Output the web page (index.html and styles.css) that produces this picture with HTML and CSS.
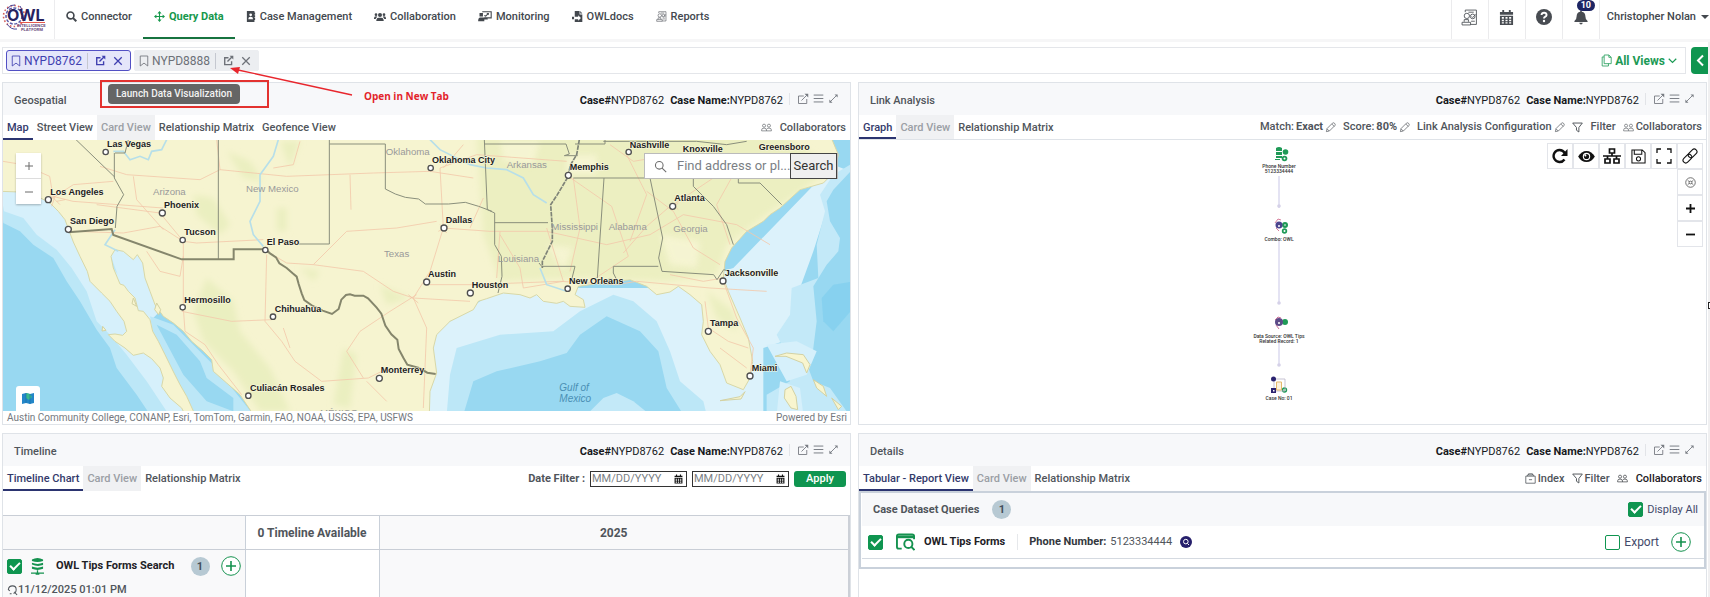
FILE: index.html
```html
<!DOCTYPE html>
<html lang="en">
<head>
<meta charset="utf-8">
<title>OWL Intelligence Platform - Query Data</title>
<meta name="viewport" content="width=device-width, initial-scale=1">
<link rel="stylesheet" href="styles.css">
</head>
<body>
<svg class="sprite" aria-hidden="true">
  <symbol id="i-launch" viewBox="0 0 16 16"><path d="M13 8v6H2V4h7" fill="none" stroke="currentColor" stroke-width="1.2"/><path d="M6 10l7-7" fill="none" stroke="currentColor" stroke-width="1.2"/><path d="M10 1h5v5z" fill="currentColor"/></symbol>
  <symbol id="i-launch-bold" viewBox="0 0 16 16"><path d="M12.500 9v5H2.500V4H8M6.500 9.500L13 3" fill="none" stroke="currentColor" stroke-width="2"/><path d="M9.500 1H15v5.500z" fill="currentColor"/></symbol>
  <symbol id="i-menu" viewBox="0 0 16 16"><path d="M1 3h14M1 8h14M1 13h14" stroke="currentColor" stroke-width="1.400"/></symbol>
  <symbol id="i-expand" viewBox="0 0 16 16"><path d="M3 13L13 3" stroke="currentColor" stroke-width="1.300"/><path d="M9.500 2H14v4.500zM2 9.500V14h4.500z" fill="currentColor"/></symbol>
  <symbol id="i-people" viewBox="0 0 18 14"><g fill="none" stroke="currentColor"><circle cx="5" cy="4" r="2.500"/><circle cx="13" cy="4" r="2.500"/><path d="M1 12.500V11q0-3 4-3t4 3v1.500zM9 12.500h8V11q0-3-4-3-3 0-4 2"/></g></symbol>
  <symbol id="i-pencil" viewBox="0 0 16 16"><path d="M2 14l1-4.500L11 1.500q1.500-1 3 .5t.5 3L6.500 13zM10 3l3.500 3.500M3 10l3 3" fill="none" stroke="currentColor"/></symbol>
  <symbol id="i-funnel" viewBox="0 0 16 16"><path d="M1 1.500h14L10 8v6.500L6.500 12V8z" fill="none" stroke="currentColor" stroke-width="1.400"/></symbol>
  <symbol id="i-close" viewBox="0 0 16 16"><path d="M2 2l12 12M14 2L2 14" stroke="currentColor" stroke-width="2"/></symbol>
  <symbol id="i-bookmark" viewBox="0 0 12 14"><path d="M1.500 1h9v12L6 9.500 1.500 13z" fill="none" stroke="currentColor"/></symbol>
  <symbol id="i-search" viewBox="0 0 16 16"><circle cx="6.500" cy="6.500" r="4.700" fill="none" stroke="currentColor" stroke-width="1.300"/><path d="M10 10l5 5" stroke="currentColor" stroke-width="1.300"/></symbol>
  <symbol id="i-cal" viewBox="0 0 16 16"><path fill="currentColor" fill-rule="evenodd" d="M1 2h2.500V0h2v2h5V0h2v2H15v3H1zM1 6h14v10H1zM3 7.500v1.700h2.200V7.500zm3.900 0v1.700h2.200V7.500zm3.900 0v1.700H13V7.500zM3 10.300V12h2.200v-1.700zm3.900 0V12h2.200v-1.700zm3.900 0V12H13v-1.700zM3 13v1.500h2.200V13zm3.900 0v1.500h2.200V13zm3.900 0v1.500H13V13z"/></symbol>
  <symbol id="i-report" viewBox="0 0 16 16"><g fill="none" stroke="currentColor" stroke-width=".8"><path d="M4 3V1h10.500v13.500H9M1 12.500h8v2.500H1zM3 12v-2h4v2M7 3h5"/><circle cx="5.500" cy="6.500" r="2.500"/><circle cx="11" cy="7" r="2.200"/><path d="M10 7l1 1 3-3M9.500 11.500H13"/></g></symbol>
  <symbol id="i-plus-circle" viewBox="0 0 20 20"><circle cx="10" cy="10" r="9.300" fill="#fff" stroke="currentColor"/><path d="M10 5v10M5 10h10" stroke="currentColor" stroke-width="1.600"/></symbol>
</svg>

<header class="topbar">
  <a class="logo" href="#" aria-label="OWL Intelligence Platform">
    <svg viewBox="0 0 44 32" width="44" height="32">
      <g fill="none">
        <circle cx="12" cy="14" r="10.500" stroke="#d5605c" stroke-width="1.600" stroke-dasharray="1.600 2.200"/>
        <circle cx="12" cy="14" r="8" stroke="#5c5aa8" stroke-width="1.500" stroke-dasharray="3 1.600"/>
        <path d="M5 22q4 6 10 5M5 7q4-5 8-4M18 4l2 4" stroke="#4b4799"/>
      </g>
      <text x="5" y="19" class="logo-word">OWL</text>
      <path d="M18 20.500h25" stroke="#e4574c"/>
      <text x="15" y="25" class="logo-sub">INTELLIGENCE</text>
      <text x="19" y="29" class="logo-sub">PLATFORM</text>
    </svg>
  </a>
  <nav class="nav">
    <a href="#" class="nav-item"><svg viewBox="0 0 16 16" width="11" height="11"><circle cx="6.500" cy="6.500" r="5" fill="none" stroke="currentColor" stroke-width="2.400"/><path d="M10 10l5 5" stroke="currentColor" stroke-width="3"/></svg>Connector</a>
    <a href="#" class="nav-item active"><svg viewBox="0 0 16 16" width="11" height="11"><path d="M8 2v12M2 8h12" stroke="currentColor" stroke-width="1.600"/><path d="M8 0l3 3.500H5zM8 16l3-3.500H5zM0 8l3.500-3v6zM16 8l-3.500-3v6z" fill="currentColor"/></svg>Query Data</a>
    <a href="#" class="nav-item"><svg viewBox="0 0 14 16" width="10" height="11"><path fill="currentColor" fill-rule="evenodd" d="M1 0h11v2h1v3h-1v1h1v3h-1v1h1v3h-1v3H1zM6.500 3.500a2 2 0 100 4 2 2 0 000-4zM3 12h7q0-3.500-3.500-3.500T3 12z"/></svg>Case Management</a>
    <a href="#" class="nav-item"><svg viewBox="0 0 18 14" width="12" height="10"><g fill="currentColor"><circle cx="9" cy="4" r="3"/><circle cx="3" cy="3.500" r="2"/><circle cx="15" cy="3.500" r="2"/><path d="M3.500 13v-1.500Q4 8 7 8h4q3 0 3.500 3.500V13zM0 9q0-3 3-3 1.500 0 2 1-2 1-2.500 3H0zM18 9q0-3-3-3-1.500 0-2 1 2 1 2.500 3H18z"/></g></svg>Collaboration</a>
    <a href="#" class="nav-item"><svg viewBox="0 0 20 16" width="14" height="11"><path d="M6 1h13v9H9M9 6.500l2 1 4-4" fill="none" stroke="currentColor" stroke-width="1.600"/><path d="M12 3h3.500v3zM2 3h5v5H2zM0 15q0-5 3-5.500h5l6 1v2H9V15z" fill="currentColor"/></svg>Monitoring</a>
    <a href="#" class="nav-item"><svg viewBox="0 0 16 16" width="11" height="11"><path fill="currentColor" fill-rule="evenodd" d="M4 0h7v5h4v11H4v-4h5v2l4-4-4-4v2.500H4zM12 0l3 3.500h-3zM0 8.500h3V12H0z"/></svg>OWLdocs</a>
    <a href="#" class="nav-item"><svg width="11" height="11"><use href="#i-report"/></svg>Reports</a>
  </nav>
  <div class="tools">
    <button class="tool" aria-label="Reports"><svg width="17" height="17"><use href="#i-report"/></svg></button>
    <button class="tool" aria-label="Calendar"><svg width="15" height="15"><use href="#i-cal"/></svg></button>
    <button class="tool" aria-label="Help"><svg viewBox="0 0 16 16" width="16" height="16"><circle cx="8" cy="8" r="8" fill="currentColor"/><path d="M5.500 6q.3-2.300 2.600-2.300T10.600 6Q10.600 7 9 7.900 8 8.400 8 9.500" fill="none" stroke="#fff" stroke-width="1.900"/><circle cx="8" cy="12" r="1.200" fill="#fff"/></svg></button>
    <button class="tool" aria-label="Notifications, 10 new"><svg viewBox="0 0 16 16" width="14" height="15"><path d="M8 0q1 0 1 1.300 4 1 4 5.200 0 4 2.500 5.500v1H.5v-1Q3 10.500 3 6.500q0-4.200 4-5.200Q7 0 8 0zM6 14h4q-.3 2-2 2t-2-2z" fill="currentColor"/></svg><span class="count">10</span></button>
    <button class="user">Christopher Nolan<span class="caret"></span></button>
  </div>
</header>

<main class="page">
  <div class="casebar-row">
    <div class="casebar">
      <div class="chip chip-on">
        <svg width="10" height="12"><use href="#i-bookmark"/></svg><span class="chip-name">NYPD8762</span>
        <button aria-label="Open NYPD8762 in new tab"><svg width="11" height="11"><use href="#i-launch-bold"/></svg></button>
        <button aria-label="Close NYPD8762"><svg width="10" height="10"><use href="#i-close"/></svg></button>
      </div>
      <div class="chip">
        <svg width="10" height="12"><use href="#i-bookmark"/></svg><span class="chip-name">NYPD8888</span>
        <button aria-label="Open NYPD8888 in new tab"><svg width="11" height="11"><use href="#i-launch-bold"/></svg></button>
        <button aria-label="Close NYPD8888"><svg width="10" height="10"><use href="#i-close"/></svg></button>
      </div>
      <button class="all-views"><svg viewBox="0 0 14 16" width="11" height="13"><path d="M4 1h6l3 3v8H4zM10 1v3h3M4 3.500H1.500V15h8v-3" fill="none" stroke="currentColor"/></svg>All Views<svg viewBox="0 0 12 8" width="9" height="6"><path d="M1 1l5 5 5-5" fill="none" stroke="currentColor" stroke-width="1.600"/></svg></button>
    </div>
    <button class="drawer" aria-label="Open drawer"><svg viewBox="0 0 8 12" width="8" height="13"><path d="M7 1L2 6l5 5" fill="none" stroke="#fff" stroke-width="2"/></svg></button>
  </div>

  <div class="panels">
    <section class="panel">
      <div class="panel-head"><h2>Geospatial</h2>
        <p class="case"><b>Case#</b>NYPD8762</p><p class="case"><b>Case Name:</b>NYPD8762</p>
        <div class="head-icons"><button aria-label="Open"><svg width="12" height="12"><use href="#i-launch"/></svg></button><button aria-label="Menu"><svg width="11" height="11"><use href="#i-menu"/></svg></button><button aria-label="Expand"><svg width="11" height="11"><use href="#i-expand"/></svg></button></div>
      </div>
      <div class="tabs"><button class="tab on">Map</button><button class="tab">Street View</button><button class="tab off">Card View</button><button class="tab">Relationship Matrix</button><button class="tab">Geofence View</button>
        <div class="tab-tools"><button class="wide"><svg width="11" height="9"><use href="#i-people"/></svg>Collaborators</button></div>
      </div>
      <div class="map">
        <svg class="map-art" viewBox="9 15 2541 815" preserveAspectRatio="xMidYMid slice" role="img" aria-label="Map of the southern United States and northern Mexico">
          <defs>
            <clipPath id="landclip"><use href="#land"/></clipPath>
            <filter id="soft"><feGaussianBlur stdDeviation="9"/></filter>
          </defs>
          <rect x="0" y="0" width="2560" height="840" fill="#98d8f1"/>
          <path fill="#bce7f7" d="M0 165L10 265 60 290 100 330 160 370 200 440 240 500 290 585 330 640 350 700 410 780 450 840H620L300 300 100 150z"/>
          <path fill="#d6f0fb" d="M0 160L12 230 70 250 110 300 170 345 215 400 260 470 290 560 330 600 380 660 440 740 500 830H640L340 400 180 180z"/>
          <path fill="#d6f0fb" d="M320 330L450 350 480 530 450 560 390 520z"/>
          <path fill="#bce7f7" d="M450 545L520 570 640 690 760 840H570L460 600z"/>
          <path fill="#98d8f1" d="M470 570L530 600 600 680 620 730 700 790 700 830 620 800 550 720z"/>
          <path fill="#dcf2fb" d="M1270 840L1290 600 1500 460H2000L2200 400 2500 90 2550 110V170L2490 150 2475 240 2440 350 2400 460 2380 590 2350 620 2290 640V840z"/>
          <path fill="#c3e9f8" d="M2500 120L2550 90V840H2300V780L2370 740 2350 640 2330 600 2370 540 2375 460 2455 430 2450 330 2475 230 2460 180z"/>
          <path fill="#98d8f1" d="M2552 110L2500 165 2480 200 2490 260 2520 310 2515 350 2480 390 2440 455 2450 560 2440 640 2425 700 2440 740 2490 760 2540 830H2560z"/>
          <path fill="#7ccdee" d="M2560 440L2500 450 2465 490 2470 560 2500 590 2560 520z" opacity=".6"/>
          <path fill="#bce7f7" d="M1340 840L1350 720 1370 640 1500 600 1660 590 1740 530 1840 480 1900 500 1970 560 2010 650 2040 740 2110 800 2120 840z"/>
          <path fill="#98d8f1" d="M1390 840L1420 740 1490 710 1620 680 1700 655 1740 600 1820 545 1920 590 1975 650 2000 760 2050 840z"/>
          <path fill="#c3e9f8" d="M1760 840L1810 790 1850 775 1900 800 1950 840z"/>
          <path fill="#d6f0fb" d="M2300 630l90-10 60 30-30 70-60 20zM2340 740l60 20 10 80h-80z"/>
          <path id="land" fill="#f6f4d0" stroke="#d8d8a8" stroke-width="3" d="M0 0V170L60 172 100 168 118 188 150 205 175 230 195 255 208 290 220 322 240 365 262 410 270 440 305 475 330 500 350 530 372 560 380 590 368 602 345 598 325 600 345 620 375 640 400 662 430 655 455 672 480 700 490 730 485 755 510 790 545 820 555 840H585L560 785 540 750 522 715 495 660 475 620 458 590 450 555 430 530 415 528 405 490 385 470 372 452 360 448 340 400 333 365 345 345 370 350 400 375 412 360 428 385 435 430 450 470 465 510 490 545 520 565 550 590 575 620 610 650 635 675 640 710 680 745 720 780 760 840H1288L1290 770 1310 715 1300 640 1310 600 1350 560 1420 525 1435 500 1460 492 1510 475 1560 480 1590 490 1610 480 1630 500 1670 506 1690 500 1710 515 1755 518 1750 495 1725 480 1735 455 1770 450 1810 442 1830 430 1850 440 1890 435 1940 455 1970 480 2010 472 2035 455 2070 480 2105 510 2110 560 2105 600 2130 650 2160 690 2180 745 2230 765 2250 730 2258 680 2245 610 2220 550 2185 470 2170 430 2175 380 2195 340 2240 290 2290 260 2310 240 2340 220 2400 165 2470 145 2505 110 2515 60 2490 0z"/>
          <g clip-path="url(#landclip)">
            <g filter="url(#soft)" fill="#e6edb9">
              <path d="M1430 0H2350L2500 100 2300 240 2180 330 2150 420 2000 440 1740 430 1500 440 1450 300z" opacity=".65"/>
              <path opacity=".7" d="M580 180l60 10 50 80-30 30-70-60zM680 50l70 30 40 60-60-10zM830 220h30v70h-30zM620 430l80 70 20 90 90 110 60 130h-90l-80-120-90-90-30-90zM1030 640l40 20-20 160-50-10zM150 250l60 60-20 20zM840 20h60l-30 80zM2120 470l80 60 10 60-60-40zM900 400l60 10-20 30zM1140 450l90 40-70 20z"/>
            </g>
            <g fill="#f8f6d6" opacity=".8" filter="url(#soft)"><path d="M1500 20h120l-20 70-90-10zM1700 60h90v60h-90zM1980 300l120 20-10 80-80-10zM1640 330l80 10-30 70z"/></g>
          </g>
          <g fill="none" stroke="#f3c9ab" stroke-width="2.500">
            <path d="M9 80l60 10 80 35 10 60 60 15 270 20M150 195l70-45 120-10M290 210l190 25 70 85 40 5 200-10M220 290l150 5 110-20 70 45v200l5 70 60 40 40 60 70 90M300 95l80 25 220 15 60-30 200 20 260-10 170-5 130 20M400 125l10 70 80 90M800 350l60 35 80 5 100-100 150-10 120-20M940 390l150 20 90 60 60 20 170 10M800 360l-5 200 50 60 40 60 80 60 140-10 60-30M545 530l150 30 120-5M870 640l-20-60M1050 120l3 105M440 350l40 60 60 15 10-60M650 15l10 90M900 20l-20 70-60 10M1240 490l50-80 40-130-10-180 110-40 270 20M1240 490l40 90-10 240M1290 450l130 0 260-10 170 10 60-10 220 20 170 10M1330 280l140 10 170 0 180 40 130-30 100-60 160 30 100 60M1705 125l130 90 50 150-120 80M1500 300l60 100 10 60 120-20M1500 290l-10 140M1880 60l60 120-50 140M1940 170l80 60 60 110 80 50M2020 210l120-80 120-30M2010 215l-70 60-70 80M1720 130l20 150-30 130M2170 440l40 110 50 90-10 80M2170 430l-60 10-100-20M2115 500l10 80 60 40 60 20M2160 640l80 60M1640 280l50 160M1830 30l70 50 120-20M2190 330l-40-120 50-90"/>
            <path d="M1090 730l-50-80 40-60 90-60 80-50M1100 740l60 60M1330 100l60-70M1450 190l-40 90"/>
          </g>
          <g fill="none" stroke="#f0c0a0" stroke-width="2"><path d="M150 180l30 30M165 185l-10 30M170 200l25-5M1320 270l20 25M1315 290l30-15M1225 480l30 25M2015 205l20 20M2010 225l25-20"/></g>
          <g fill="none" stroke="#b7dfe9" stroke-width="5">
            <path d="M340 50l30 0 20 25 30-10 25 10 10-25 30-5 15-30M835 15l-15 50-40 55 0 80-30 60 10 40 30 35M1290 15l30 30 90 45 50 10 60 5 50 25 30 50 40 25M1620 400l20 50 60 20M345 285l-30 45 40 20"/>
          </g>
          <g fill="none" stroke="#8a8f7c" stroke-width="3">
            <path d="M228 15L345 128M345 55h30l10-40M343 55v75l28 50-20 35-5 65M655 15v358M988 15v313H890M988 28h168v135l30 15 30 10 40 5 20 15 70 0 50-5 40 12 40 15M1453 15l9 210 22 10v95l20 35 2 60-12 50M1453 28h245l10 30-15 5h40M1484 264h160M1720 130h400l130 0M1725 28h90V15M1812 130l-20 300M1950 130l38 180-12 60 10 40 155 10 10 15 20-30 15 5M1725 395H1625l-8-10M1725 395l-10 40M1850 435l-10-20 0-20h135M2080 130l0 25 60 60 40 55 20 60M2215 130v15h65l65 65M1810 20h280l90 10 60-10"/>
            <path stroke="#7f8478" stroke-width="5" d="M1738 15l-8 45-18 30-10 40-30 50-20 30 5 70 0 40-30 60 0 20" stroke-dasharray="14 3"/>
            <path stroke="#85866c" stroke-width="6" d="M205 293l130-10 5 18 205 73h156v-30h95l14 12 18 12 10 18 22 14 18 16 12 10 6 22 9 28 8 20 25 18 30 14 28 10 20-15 8-28 14-14 12-2 14 4 26 0 14 8 26 28 14 18 12 36 18 26 18 16 4 28 14 26 12 21 35 10 25 14 25 4"/>
          </g>
          <g fill="#f8f5cf" stroke="#d3d2a4" stroke-width="3"><path d="M2325 665l35-10 50 5 20 30-10 25-12-30-50-20zM2355 765l18-10 15 30 5 40-20-5-20-30zM2440 735l30 20 10 30-30-25zM2495 790l30 25-10 10zM2160 798l60-12 15-15-12 22z"/><path d="M400 490l10 25-14-8zM470 505l12 20-6 15-12-15zM308 575l10 12-12 2z"/></g>
          <g class="city-dots">
            <circle cx="317" cy="52" r="8"/><circle cx="145" cy="195" r="9"/><circle cx="205" cy="284" r="9"/><circle cx="487" cy="235" r="9"/><circle cx="548" cy="316" r="8"/><circle cx="796" cy="346" r="8"/><circle cx="548" cy="518" r="8"/><circle cx="819" cy="546" r="8"/><circle cx="1138" cy="731" r="9"/><circle cx="745" cy="783" r="8"/><circle cx="1280" cy="442" r="9"/><circle cx="1292" cy="100" r="8"/><circle cx="1332" cy="280" r="9"/><circle cx="1411" cy="475" r="9"/><circle cx="1705" cy="122" r="9"/><circle cx="1886" cy="52" r="8"/><circle cx="2018" cy="215" r="9"/><circle cx="2169" cy="439" r="9"/><circle cx="2125" cy="590" r="9"/><circle cx="2250" cy="724" r="9"/><circle cx="1703" cy="462" r="8"/>
          </g>
          <g class="state">
            <text x="459" y="182">Arizona</text><text x="738" y="173">New Mexico</text><text x="1157" y="62">Oklahoma</text><text x="1152" y="366">Texas</text><text x="1520" y="101">Arkansas</text><text x="1654" y="287">Mississippi</text><text x="1826" y="285">Alabama</text><text x="2020" y="293">Georgia</text><text x="1493" y="382">Louisiana</text><text x="960" y="845">MÉXICO</text>
          </g>
          <g class="city">
            <text x="321" y="37">Las Vegas</text><text x="151" y="180">Los Angeles</text><text x="210" y="268">San Diego</text><text x="492" y="219">Phoenix</text><text x="553" y="302">Tucson</text><text x="800" y="332">El Paso</text><text x="553" y="504">Hermosillo</text><text x="824" y="531">Chihuahua</text><text x="1142" y="715">Monterrey</text><text x="750" y="769">Culiacán Rosales</text><text x="1284" y="427">Austin</text><text x="1296" y="86">Oklahoma City</text><text x="1337" y="264">Dallas</text><text x="1415" y="459">Houston</text><text x="1709" y="106">Memphis</text><text x="1889" y="39">Nashville</text><text x="2048" y="52">Knoxville</text><text x="2276" y="46">Greensboro</text><text x="2023" y="200">Atlanta</text><text x="2174" y="423">Jacksonville</text><text x="2130" y="574">Tampa</text><text x="2255" y="708">Miami</text><text x="1707" y="449">New Orleans</text>
          </g>
          <g class="sea"><text x="1678" y="769">Gulf of</text><text x="1678" y="801">Mexico</text></g>
        </svg>
        <div class="zoomer"><button aria-label="Zoom in"><svg viewBox="0 0 8 8" width="8" height="8"><path d="M4 0v8M0 4h8"/></svg></button><button aria-label="Zoom out"><svg viewBox="0 0 8 8" width="8" height="8"><path d="M0 4h8"/></svg></button></div>
        <form class="finder"><svg width="13" height="13"><use href="#i-search"/></svg><input type="text" aria-label="Find address or place" placeholder="Find address or pl..."><button type="button">Search</button></form>
        <button class="basemap" aria-label="Basemap"><svg viewBox="0 0 12 11" width="12" height="11"><path d="M0 1l4-1 4 1 4-1v10l-4 1-4-1-4 1z" fill="#2386c8"/><path d="M4 0l4 1 2 3-3 3-3-2z" fill="#38b98c"/><path d="M4 0v10M8 1v10" stroke="#176ba5" stroke-width=".6"/></svg></button>
      </div>
      <div class="credit"><span>Austin Community College, CONANP, Esri, TomTom, Garmin, FAO, NOAA, USGS, EPA, USFWS</span><span>Powered by Esri</span></div>
    </section>

    <section class="panel">
      <div class="panel-head"><h2>Link Analysis</h2>
        <p class="case"><b>Case#</b>NYPD8762</p><p class="case"><b>Case Name:</b>NYPD8762</p>
        <div class="head-icons"><button aria-label="Open"><svg width="12" height="12"><use href="#i-launch"/></svg></button><button aria-label="Menu"><svg width="11" height="11"><use href="#i-menu"/></svg></button><button aria-label="Expand"><svg width="11" height="11"><use href="#i-expand"/></svg></button></div>
      </div>
      <div class="tabs ruled"><button class="tab on">Graph</button><button class="tab off">Card View</button><button class="tab">Relationship Matrix</button>
        <div class="tab-tools"><button>Match: <b>Exact</b><svg width="11" height="11"><use href="#i-pencil"/></svg></button><button>Score: <b>80%</b><svg width="11" height="11"><use href="#i-pencil"/></svg></button><button>Link Analysis Configuration <svg width="11" height="11"><use href="#i-pencil"/></svg></button><button class="wide"><svg width="11" height="11"><use href="#i-funnel"/></svg>Filter</button><button><svg width="11" height="9"><use href="#i-people"/></svg>Collaborators</button></div>
      </div>
      <div class="graph">
        <svg class="graph-art" viewBox="0 0 120 282" width="120" height="282" role="img" aria-label="Link graph with four nodes">
          <path d="M60 36v32M60 98v66M60 200v26" stroke="#dcdaf0" stroke-width="1.500"/>
          <g fill="#d5d1e8"><circle cx="60" cy="66" r="1.800"/><circle cx="60" cy="163" r="1.800"/><circle cx="60" cy="225" r="1.800"/></g>
          <g fill="#1f9a57"><path d="M57 8q3-2 6 0v3h-6zM57 12h6v3h-6zM57 16h6v2h-6zM56 19h5v1h-5z"/><circle cx="66.500" cy="12" r="2.800"/><circle cx="65.500" cy="18.500" r="2.800"/><circle cx="66" cy="85" r="3"/><circle cx="65.500" cy="91" r="2.700"/><circle cx="66" cy="182" r="3"/><circle cx="65.500" cy="250" r="2.700"/></g>
          <g fill="#fff"><circle cx="65.500" cy="18.500" r="1"/><circle cx="66" cy="85" r=".8"/><circle cx="65.500" cy="91" r="1"/><rect x="64" y="249.500" width="3" height="1"/></g>
          <g><circle cx="60" cy="85" r="3.500" fill="#4c448e"/><path d="M56 83l3-4 3 1M57 88l3 3" stroke="#d77c9a" fill="none"/><circle cx="60" cy="86" r="1" fill="#fff"/><circle cx="60" cy="182" r="4" fill="#5c4b88"/><path d="M56 180l3-3 3 1M57 185l3 4" stroke="#c7719a" fill="none"/><circle cx="60" cy="183" r="1" fill="#fff"/></g>
          <path d="M55 239h11v12H55z" fill="none" stroke="#b9b4c8" stroke-width=".8"/><path d="M57.500 242h5v8h-5z" fill="#fdf3df" stroke="#e5b96b"/><circle cx="54.500" cy="239" r="2.500" fill="#2b2370"/><rect x="52" y="248" width="5" height="5" fill="#2b2370"/><rect x="54" y="250" width="1.500" height="1.500" fill="#fff"/>
          <g class="node-label"><text x="60" y="28">Phone Number</text><text x="60" y="33">5123334444</text><text x="60" y="101">Combo: OWL</text><text x="60" y="198">Data Source: OWL Tips</text><text x="60" y="203">Related Record: 1</text><text x="60" y="260">Case No: 01</text></g>
        </svg>
        <div class="gtools">
          <button aria-label="Refresh"><svg viewBox="0 0 16 16" width="16" height="16"><path d="M12.500 11.500A6 6 0 117.500 2q3.500 0 5.500 3.500" fill="none" stroke="currentColor" stroke-width="2.400"/><path d="M15.500 1v7H9z" fill="currentColor"/></svg></button>
          <button aria-label="Visibility"><svg viewBox="0 0 18 14" width="17" height="13"><path fill="currentColor" d="M9 1q5.500 0 9 6-3.500 6-9 6T0 7q3.500-6 9-6z"/><circle cx="9" cy="7" r="4" fill="#fff"/><circle cx="9" cy="7" r="2.800" fill="currentColor"/><circle cx="7.800" cy="5.800" r="1.100" fill="#fff"/></svg></button>
          <button aria-label="Hierarchy"><svg viewBox="0 0 18 16" width="18" height="16"><g fill="none" stroke="currentColor" stroke-width="1.700"><path d="M6.500 1h5v4h-5zM2 11h5v4H2zM11 11h5v4h-5zM9 5v3M0 8h18M4.500 8v3M13.500 8v3"/></g></svg></button>
          <button aria-label="Save"><svg viewBox="0 0 16 16" width="15" height="15"><g fill="none" stroke="currentColor" stroke-width="1.100"><path d="M1 1h11l3 3v11H1zM3.500 1v4.500h8V1"/><circle cx="8" cy="10.500" r="2.200"/></g></svg></button>
          <button aria-label="Fit"><svg viewBox="0 0 16 16" width="16" height="16"><path d="M1 5V1h4M11 1h4v4M15 11v4h-4M5 15H1v-4" fill="none" stroke="currentColor" stroke-width="1.300"/></svg></button>
          <button aria-label="Link"><svg viewBox="0 0 16 16" width="16" height="16"><g fill="none" stroke="currentColor" stroke-width="1.100"><rect x="5.600" y="2.700" width="10" height="5.400" rx="2.700" transform="rotate(-45 10.600 5.400)"/><rect x=".4" y="7.900" width="10" height="5.400" rx="2.700" transform="rotate(-45 5.400 10.600)"/></g></svg></button>
          <button class="last" aria-label="Recenter"><svg viewBox="0 0 12 12" width="11" height="11"><g fill="none" stroke="#666"><circle cx="6" cy="6" r="5.200"/><circle cx="6" cy="6" r="1.500"/><path d="M3 4l2 1M9 4L7 5M3 8l2-1M9 8L7 7"/></g></svg></button>
          <button class="last" aria-label="Zoom in"><svg viewBox="0 0 10 10" width="9" height="9"><path d="M5 0v10M0 5h10" stroke="currentColor" stroke-width="2"/></svg></button>
          <button class="last" aria-label="Zoom out"><svg viewBox="0 0 10 10" width="9" height="9"><path d="M0 5h10" stroke="currentColor" stroke-width="2"/></svg></button>
        </div>
      </div>
    </section>

    <section class="panel">
      <div class="panel-head"><h2>Timeline</h2>
        <p class="case"><b>Case#</b>NYPD8762</p><p class="case"><b>Case Name:</b>NYPD8762</p>
        <div class="head-icons"><button aria-label="Open"><svg width="12" height="12"><use href="#i-launch"/></svg></button><button aria-label="Menu"><svg width="11" height="11"><use href="#i-menu"/></svg></button><button aria-label="Expand"><svg width="11" height="11"><use href="#i-expand"/></svg></button></div>
      </div>
      <div class="tabs"><button class="tab on">Timeline Chart</button><button class="tab off">Card View</button><button class="tab">Relationship Matrix</button>
        <form class="dates"><label for="from">Date Filter :</label>
          <span class="date"><input id="from" type="text" placeholder="MM/DD/YYYY"><svg width="9" height="10"><use href="#i-cal"/></svg></span>
          <span class="date"><input aria-label="To date" type="text" placeholder="MM/DD/YYYY"><svg width="9" height="10"><use href="#i-cal"/></svg></span>
          <button type="button">Apply</button></form>
      </div>
      <table class="timeline">
        <thead><tr><th class="c1"></th><th class="c2">0 Timeline Available</th><th>2025</th></tr></thead>
        <tbody><tr><td>
          <div class="query"><input type="checkbox" checked aria-label="OWL Tips Forms Search"><svg viewBox="0 0 14 20" width="13" height="20"><path d="M1 3q6-3.500 12 0v1.500Q7 7 1 4.500zM1 6.500q6 2.500 12 0V9Q7 11 1 8.500zM1 10.500q6 2.500 12 0V13q-6 2.500-12 0zM6.300 14.500h1.400V17h-1.400zM0 17h14v1.300H9v1H5v-1H0z" fill="#15924f"/></svg><b>OWL Tips Forms Search</b><span class="pill">1</span><button aria-label="Add"><svg width="20" height="20"><use href="#i-plus-circle"/></svg></button></div>
          <div class="when"><svg viewBox="0 0 12 12" width="11" height="12"><path d="M1.500 5.500Q2 1.500 6 1.500T10 5.500 7 9.500M8 8l3 3.500M3 7L1 5M5 10H3" fill="none" stroke="currentColor" stroke-width="1.100"/></svg>11/12/2025 01:01 PM</div>
        </td><td class="empty"></td><td></td></tr></tbody>
      </table>
    </section>

    <section class="panel">
      <div class="panel-head"><h2>Details</h2>
        <p class="case"><b>Case#</b>NYPD8762</p><p class="case"><b>Case Name:</b>NYPD8762</p>
        <div class="head-icons"><button aria-label="Open"><svg width="12" height="12"><use href="#i-launch"/></svg></button><button aria-label="Menu"><svg width="11" height="11"><use href="#i-menu"/></svg></button><button aria-label="Expand"><svg width="11" height="11"><use href="#i-expand"/></svg></button></div>
      </div>
      <div class="tabs"><button class="tab on">Tabular - Report View</button><button class="tab off">Card View</button><button class="tab">Relationship Matrix</button>
        <div class="tab-tools"><button><svg viewBox="0 0 14 14" width="11" height="11"><path d="M1 4h12v9H1zM3 4V2.500h8V4M4.500 2.500V1h5v1.500M5 8.500h4" fill="none" stroke="currentColor"/></svg>Index</button><button><svg width="11" height="11"><use href="#i-funnel"/></svg>Filter</button><button class="wide dark"><svg width="11" height="9"><use href="#i-people"/></svg>Collaborators</button></div>
      </div>
      <div class="report">
        <div class="report-head"><b>Case Dataset Queries</b><span class="pill">1</span><label class="push"><input type="checkbox" checked>Display All</label></div>
        <div class="report-row"><input type="checkbox" checked aria-label="OWL Tips Forms"><svg viewBox="0 0 20 18" width="19" height="18"><path d="M1 3q0-2 2-2h14q2 0 2 2v3M1 3v11q0 2 2 2h3" fill="none" stroke="#15924f" stroke-width="2"/><path d="M1 2h18v3H1z" fill="#15924f"/><circle cx="13" cy="11" r="4.300" fill="none" stroke="#15924f" stroke-width="2"/><path d="M16 14l3.500 3.500" stroke="#15924f" stroke-width="2"/></svg><b class="name">OWL Tips Forms</b><span class="field"><b>Phone Number:</b>5123334444</span><svg viewBox="0 0 12 12" width="12" height="12"><circle cx="6" cy="6" r="6" fill="#261f6b"/><circle cx="5.800" cy="5.600" r="2.300" fill="none" stroke="#fff"/><path d="M7.500 7.500L9 9" stroke="#fff"/></svg><label class="push export"><input type="checkbox">Export</label><button aria-label="Add"><svg width="20" height="20"><use href="#i-plus-circle"/></svg></button></div>
      </div>
    </section>
  </div>
</main>

<div class="callout">
  <div class="frame"></div>
  <div class="tip" role="tooltip">Launch Data Visualization</div>
  <svg class="arrow" viewBox="0 0 124 30" width="124" height="30"><path d="M122 28L8 3" stroke="#e8262d" stroke-width="1.300"/><path d="M0 1l10-1-2 7z" fill="#e8262d"/></svg>
  <span class="note">Open in New Tab</span>
</div>
<span class="grip"></span>
</body>
</html>
```

FILE: styles.css
```css
* { box-sizing: border-box; }
:root {
  --ink: #50555b;
  --green: #0f9550;
  --navy: #2b3470;
  --line: #dfe3e8;
}
body {
  margin: 0;
  min-height: 100vh;
  display: flex;
  flex-direction: column;
  position: relative;
  overflow: hidden;
  background: #fff;
  color: var(--ink);
  font: 500 11px/16px Roboto, "Noto Sans", sans-serif;
}
button, input { font: inherit; color: inherit; }
button { border: 0; padding: 0; background: none; cursor: pointer; white-space: nowrap; }
svg { display: block; flex: none; }
h2, p { margin: 0; }
b { font-weight: 700; }
.sprite { position: absolute; width: 0; height: 0; }

.topbar { display: flex; height: 42px; border-bottom: 3px solid #f6f6f7; }
.logo { width: 55px; padding: 2px 0 0 2px; border-right: 1px solid #ececee; }
.logo-word { font: 700 16px Inter, sans-serif; fill: #27235f; }
.logo-sub { font: 700 4px Inter, sans-serif; fill: #6a4a7c; }
.nav { display: flex; }
.nav-item {
  display: flex; align-items: center; gap: 4px; padding: 2px 11px 6px; height: 39px;
  color: #43484e; text-decoration: none; font-weight: 500; border-bottom: 2px solid transparent;
}
.nav-item.active { color: #16984c; border-color: #16733f; font-weight: 700; }
.tools { margin-left: auto; display: flex; }
.tool {
  position: relative; width: 37px; height: 39px; padding-bottom: 5px;
  border-left: 1px solid #ebebed; display: grid; place-items: center; color: #484c52;
}
.count {
  position: absolute; left: 14px; top: 0; min-width: 18px; padding: 0 3px; border-radius: 8px;
  background: #1d2563; color: #fff; font-size: 9px; line-height: 11px; font-weight: 700;
}
.user { display: flex; align-items: center; gap: 5px; padding: 0 1px 6px 7px; border-left: 1px solid #ebebed; color: #43484e; }
.caret { border: 4px solid transparent; border-top-color: currentColor; border-bottom: 0; }

.page { flex: 1; display: flex; flex-direction: column; padding: 5px 1px 0 2px; border-right: 2px solid #f0f0f1; }
.casebar-row { display: flex; gap: 5px; margin-right: -1px; }
.casebar { flex: 1; display: flex; align-items: center; gap: 3px; height: 27px; padding: 0 8px 0 3px; border: 1px solid #e4e6ea; background: #fff; }
.chip { display: flex; align-items: center; height: 21px; padding: 0 7px 0 4px; border-radius: 2px; background: #eceef1; color: #6d7178; font-size: 12px; font-weight: 400; border: 1px solid #eceef1; }
.chip-on { background: #e5e6fa; border-color: #5250c4; color: #3f3fb0; border-radius: 3px; }
.chip-name { padding: 0 5px 0 3px; margin-right: 7px; border-right: 1px solid #c5c8d0; }
.chip button + button { margin-left: 7px; }
.all-views { margin-left: auto; display: flex; align-items: center; gap: 3px; color: #1c9a55; font-size: 12px; font-weight: 700; }
.drawer { width: 17px; height: 27px; display: grid; place-items: center; background: var(--green); border-radius: 4px 0 0 4px; }

.panels { flex: 1; display: grid; grid-template-columns: 1fr 1fr; grid-template-rows: auto 1fr; gap: 8px 7px; margin-top: 8px; }
.panel { min-width: 0; display: flex; flex-direction: column; border: 1px solid var(--line); background: #fff; }
.panel:nth-child(n+3) { border-bottom: 0; }
.panel-head { display: flex; align-items: center; height: 32px; padding: 3px 4px 0 11px; background: #f7f8fa; }
.panel-head h2 { font-size: 11px; font-weight: 500; margin-right: auto; }
.case { color: #16191d; margin-left: 6px; font-weight: 400; }
.head-icons { display: flex; align-items: center; gap: 4px; margin: -4px 0 0 6px; padding: 0 7px; border-left: 1px solid #e2e4e8; color: #777b82; }
.tabs { display: flex; height: 25px; background: #fff; }
.ruled { border-bottom: 1px solid var(--line); }
.tab { padding: 3px 4px 0; border-bottom: 2px solid transparent; }
.tab.on { color: #333a6b; border-color: var(--navy); }
.tab.off { background: #f0f1f3; color: #9b9fa5; border-color: #f0f1f3; }
.tab-tools { margin-left: auto; display: flex; align-items: center; gap: 7px; padding-right: 4px; }
.tab-tools button { display: flex; align-items: center; gap: 2px; }
.tab-tools .wide { gap: 8px; }
.tab-tools .dark { color: #1e2126; }

.map { position: relative; height: 271px; overflow: hidden; }
.map-art { width: 100%; height: 100%; }
.city-dots { fill: #fff; stroke: #4f4f4f; stroke-width: 4; }
.city { font: 700 27px "Liberation Sans", Arial, sans-serif; fill: #222; stroke: #fbf9e0; stroke-width: 3; paint-order: stroke; }
.state { font: 400 29px "Liberation Sans", Arial, sans-serif; fill: #99999a; }
.sea { font: italic 400 30px "Liberation Sans", Arial, sans-serif; fill: #4a8fb4; }
.zoomer { position: absolute; left: 13px; top: 13px; width: 25px; display: grid; gap: 1px; background: #ddd; box-shadow: 0 1px 2px #0004; }
.zoomer button { height: 25px; background: #fff; display: grid; place-items: center; }
.zoomer path { stroke: #6b6b6b; }
.finder { position: absolute; right: 12px; top: 13px; display: flex; align-items: center; width: 194px; height: 26px; padding-left: 9px; background: #fff; border: 1px solid #bbb; color: #6b6b6b; font-size: 13px; }
.finder input { flex: 1; min-width: 0; border: 0; padding: 0 0 0 10px; background: none; font-weight: 400; }
.finder input::placeholder, .date input::placeholder { color: #7b7f85; opacity: 1; }
.finder button { width: 47px; height: 26px; background: #efefef; border: 1px solid #444; color: #333; font-weight: 400; }
.basemap { position: absolute; left: 13px; bottom: 0; width: 24px; height: 25px; background: #fff; border-radius: 3px 3px 0 0; display: grid; place-items: center; }
.credit { display: flex; justify-content: space-between; height: 13px; padding: 0 3px 0 4px; font-size: 10px; line-height: 13px; font-weight: 400; color: #74787e; }

.graph { position: relative; flex: 1; display: flex; justify-content: center; padding-right: 8px; }
.node-label { font: 500 5px Roboto, sans-serif; fill: #333; text-anchor: middle; }
.gtools { position: absolute; right: 3px; top: 3px; display: grid; grid-template-columns: repeat(6, 26px); grid-auto-rows: 26px; color: #111; }
.gtools button { display: grid; place-items: center; background: #fff; border: 1px solid #e3e5ea; }
.gtools .last { grid-column: 6; }

.dates { margin-left: auto; display: flex; align-items: center; gap: 5px; padding-right: 4px; }
.dates label { font-weight: 700; }
.date { display: flex; align-items: center; width: 97px; height: 16px; padding-right: 3px; border: 1px solid #333; color: #111; }
.date input { flex: 1; min-width: 0; border: 0; padding: 0 0 0 1px; height: 14px; background: none; font-weight: 400; }
.dates button { width: 52px; height: 16px; line-height: 16px; border-radius: 3px; background: var(--green); color: #fff; }
.timeline { flex: 1; width: 100%; margin-top: 24px; padding: 0; border-collapse: collapse; table-layout: fixed; background: #f9f9fa; border-top: 1px solid #c9ced6; border-right: 2px solid #ccd0d7; }
.timeline th { height: 34px; padding: 0; font-size: 12px; font-weight: 700; border-bottom: 1px solid #c9ced6; }
.timeline td { padding: 0; vertical-align: top; }
.timeline .c1 { width: 242px; }
.timeline .c2, .timeline .empty { width: 134px; background: #fff; border-left: 1px solid #c9d0d9; border-right: 1px solid #c9d0d9; }
.query { display: flex; align-items: center; padding: 6px 4px 0; color: #1e2126; }
.query svg { margin-left: 9px; }
.query b { margin-left: 12px; }
.query .pill { margin-left: auto; }
.query button svg { margin-left: 11px; color: #15924f; }
.when { display: flex; align-items: center; margin-top: 6px; padding-left: 4px; }
.pill { width: 19px; height: 19px; border-radius: 50%; background: #b7c9d3; color: #44505c; font-weight: 700; text-align: center; line-height: 19px; }
input[type="checkbox"] { appearance: none; flex: none; width: 15px; height: 15px; margin: 0; border: 1px solid var(--green); border-radius: 2px; background: #fff; display: grid; place-items: center; }
input[type="checkbox"]:checked { background: var(--green); }
input[type="checkbox"]:checked::before { content: ""; width: 8px; height: 4px; margin-top: -3px; border: solid #fff; border-width: 0 0 2px 2px; transform: rotate(-45deg); }
.report { border: 2px solid #c9d1db; padding-bottom: 8px; }
.report-head, .report-row { display: flex; align-items: center; height: 33px; margin-left: 1px; border-bottom: 1px solid #d5dae1; }
.report-head { padding: 0 6px 0 11px; background: #f7f8fa; border: 0; }
.report-head .pill { margin-left: 13px; }
.push { margin-left: auto; display: flex; align-items: center; gap: 4px; color: #434a6b; font-weight: 400; }
.report-row { padding: 0 13px 0 6px; color: #1e2126; }
.report-row > svg { margin-left: 13px; }
.name { margin-left: 9px; padding-right: 12px; border-right: 1px solid #e6e8eb; }
.field { margin-left: 11px; margin-right: -5px; display: flex; gap: 4px; font-weight: 400; color: #50555b; }
.field b { color: #33373d; }
.export { font-size: 12px; }
.report-row button { margin-left: 12px; color: #15924f; }

.callout { position: absolute; left: 100px; top: 66px; color: #e3242b; }
.frame { position: absolute; left: 0; top: 14px; width: 169px; height: 28px; border: 2px solid #e3322f; }
.tip { position: absolute; left: 8px; top: 18px; width: 132px; height: 20px; border-radius: 4px; background: #656565; color: #f2f2f2; text-align: center; font-size: 10px; line-height: 20px; white-space: nowrap; }
.arrow { position: absolute; left: 130px; top: 1px; }
.note { position: absolute; left: 264px; top: 20px; white-space: nowrap; font: 700 10px/20px "Open Sans", "Noto Sans", sans-serif; }
.grip { position: absolute; right: -3px; top: 302px; width: 5px; height: 7px; border: 1px solid #222; background: #fff; }
```
